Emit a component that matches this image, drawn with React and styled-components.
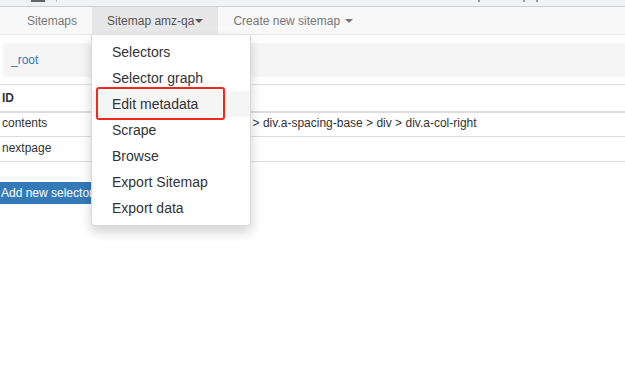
import React from "react";
import styled, { createGlobalStyle } from "styled-components";

const Global = createGlobalStyle`
  html, body { margin: 0; padding: 0; background: #fff; }
  body { font-family: "Liberation Sans", Arial, sans-serif; color: #333; }
  * { box-sizing: border-box; }
`;

const Page = styled.div`
  position: relative;
  width: 625px;
  height: 392px;
  overflow: hidden;
  background: #fff;
`;

const BrowserStrip = styled.div`
  height: 7px;
  background: #f1f2f4;
  border-bottom: 1px solid #cdd1d6;
  display: flex;
  align-items: flex-start;
  padding-left: 31px;
  gap: 11px;
`;

const StripBlock = styled.span`
  width: ${(p) => p.w}px;
  height: ${(p) => p.h}px;
  background: ${(p) => p.c};
  margin-left: ${(p) => p.ml || 0}px;
`;

const Navbar = styled.nav`
  height: 28px;
  background: #f8f8f8;
  border-bottom: 1px solid #e7e7e7;
  display: flex;
  padding-left: 12px;
  font-size: 12px;
`;

const NavItem = styled.div`
  position: relative;
  display: flex;
  align-items: center;
  padding: 0 ${(p) => (p.active ? "15px" : "15px")} 0 15px;
  color: ${(p) => (p.active ? "#555" : "#777")};
  background: ${(p) => (p.active ? "#e7e7e7" : "transparent")};
  white-space: nowrap;
`;

const Caret = styled.span`
  display: inline-block;
  width: 0;
  height: 0;
  margin-left: ${(p) => p.gap}px;
  border-top: 4px solid currentColor;
  border-left: 4px solid transparent;
  border-right: 4px solid transparent;
  vertical-align: middle;
`;

const Content = styled.div`
  padding-top: 8px;
`;

const Breadcrumb = styled.div`
  margin-left: 3px;
  height: 34px;
  background: #f5f5f5;
  display: flex;
  align-items: center;
  padding-left: 8px;
  font-size: 12px;
`;

const Crumb = styled.a`
  color: #337ab7;
  text-decoration: none;
`;

const Table = styled.table`
  margin-top: 7px;
  width: 100%;
  border-collapse: collapse;
  font-size: 12px;
  border-top: 1px solid #ddd;
`;

const Th = styled.th`
  text-align: left;
  font-weight: bold;
  height: 27px;
  padding: 0 2px;
  border-bottom: 2px solid #ddd;
  width: ${(p) => p.w || "auto"};
`;

const Td = styled.td`
  height: 25px;
  padding: 0 2px 3px;
  border-bottom: 1px solid #ddd;
  white-space: nowrap;
  vertical-align: middle;
`;

const AddButton = styled.button`
  margin-top: 20px;
  height: 22px;
  border: none;
  border-radius: 0 3px 3px 0;
  background: #337ab7;
  color: #fff;
  font-family: "Liberation Sans", Arial, sans-serif;
  font-size: 12px;
  padding: 0 6px 0 1px;
  display: block;
`;

const Menu = styled.ul`
  position: absolute;
  left: 91px;
  top: 35px;
  width: 160px;
  margin: 0;
  padding: 4px 0;
  list-style: none;
  background: #fff;
  border: 1px solid rgba(0, 0, 0, 0.15);
  border-top: none;
  border-radius: 0 0 4px 4px;
  box-shadow: 0 6px 12px rgba(0, 0, 0, 0.175);
  font-size: 14px;
  z-index: 5;
`;

const MenuItem = styled.li`
  position: relative;
  height: 26px;
  display: flex;
  align-items: center;
  padding-left: 20px;
  color: #333;
  background: ${(p) => (p.hover ? "#f5f5f5" : "transparent")};
`;

const Highlight = styled.span`
  position: absolute;
  left: 4px;
  top: -4px;
  width: 129px;
  height: 33px;
  border: 2px solid #f0281e;
  border-radius: 3px;
  pointer-events: none;
`;

const items = [
  "Selectors",
  "Selector graph",
  "Edit metadata",
  "Scrape",
  "Browse",
  "Export Sitemap",
  "Export data",
];

export default function App() {
  return (
    <Page>
      <Global />
      <BrowserStrip>
        <StripBlock w={14} h={2} c="#666" />
        <StripBlock w={1} h={2} c="#bbb" />
        <StripBlock w={2} h={2} c="#999" ml={410} />
        <StripBlock w={2} h={2} c="#999" ml={32} />
        <StripBlock w={2} h={2} c="#999" />
      </BrowserStrip>
      <Navbar>
        <NavItem>Sitemaps</NavItem>
        <NavItem active>
          Sitemap amz-qa<Caret gap={1} />
        </NavItem>
        <NavItem>
          Create new sitemap<Caret gap={5} />
        </NavItem>
      </Navbar>
      <Content>
        <Breadcrumb>
          <Crumb href="#">_root</Crumb>
        </Breadcrumb>
        <Table>
          <thead>
            <tr>
              <Th w="108px">ID</Th>
              <Th>Selector</Th>
            </tr>
          </thead>
          <tbody>
            <tr>
              <Td>contents</Td>
              <Td>div.s-result-list &gt; div.sg-col &gt; div.a-spacing-base &gt; div &gt; div.a-col-right</Td>
            </tr>
            <tr>
              <Td>nextpage</Td>
              <Td>li.a-last a</Td>
            </tr>
          </tbody>
        </Table>
        <AddButton>Add new selector</AddButton>
      </Content>
      <Menu>
        {items.map((t) => (
          <MenuItem key={t} hover={t === "Edit metadata"}>
            {t}
            {t === "Edit metadata" && <Highlight />}
          </MenuItem>
        ))}
      </Menu>
    </Page>
  );
}
